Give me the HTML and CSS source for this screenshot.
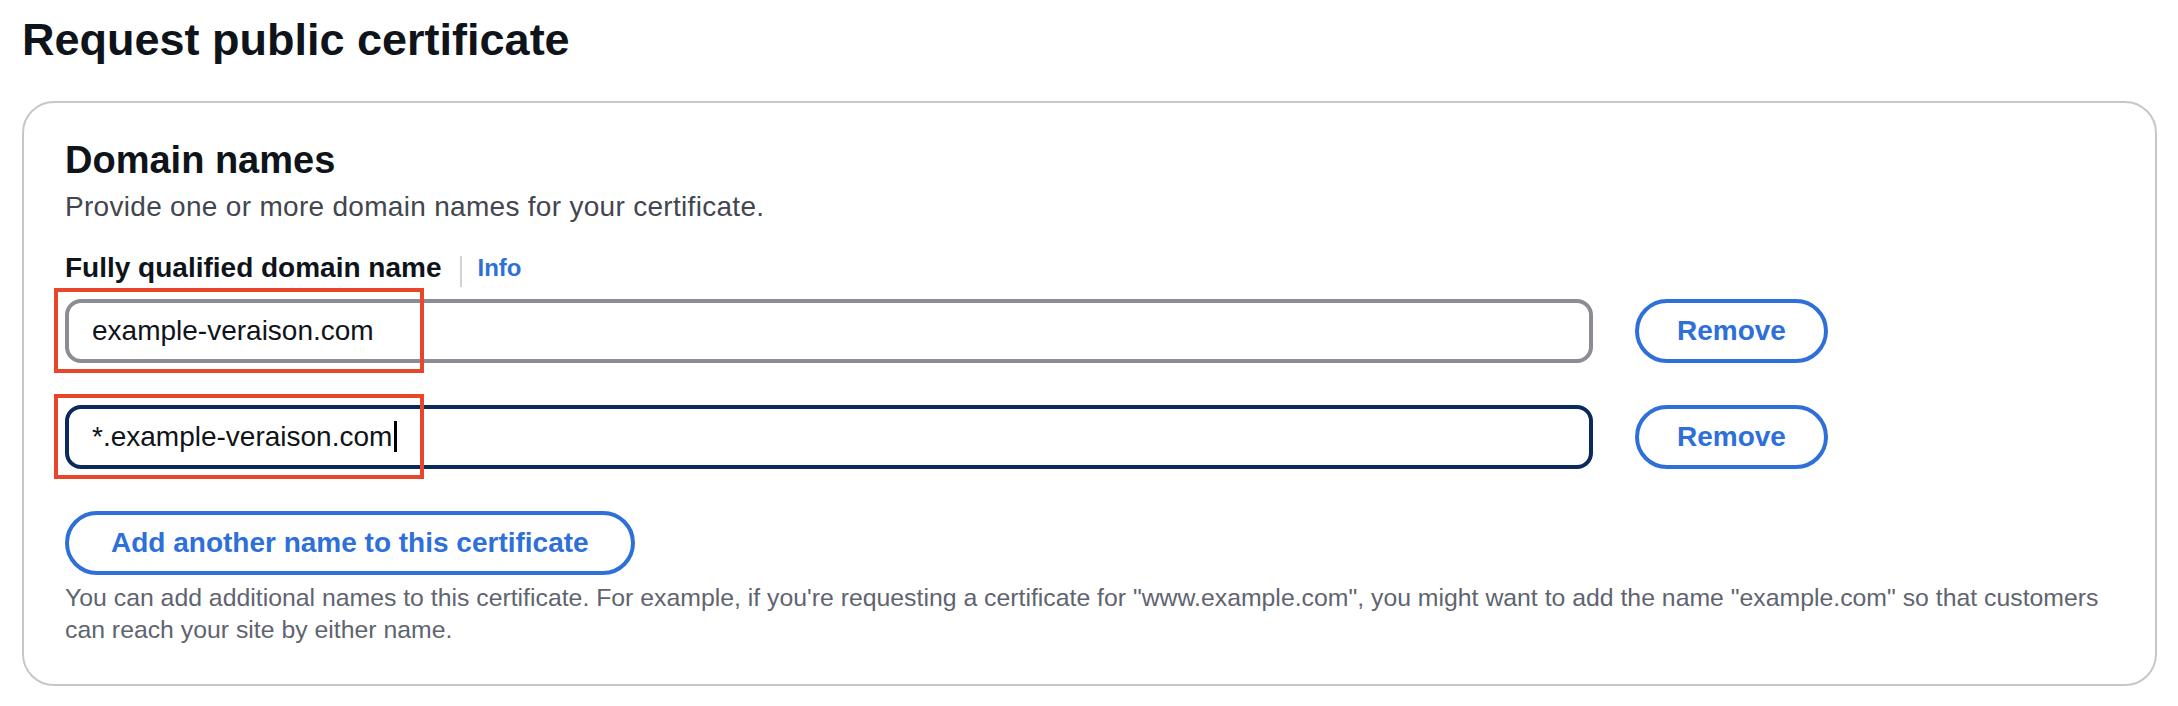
FILE: index.html
```html
<!DOCTYPE html>
<html lang="en">
<head>
<meta charset="utf-8">
<title>Request public certificate</title>
<link rel="stylesheet" href="styles.css">
</head>
<body>
<div class="page">
  <h1 class="page-title">Request public certificate</h1>
  <section class="card">
    <h2 class="card-title">Domain names</h2>
    <p class="card-desc">Provide one or more domain names for your certificate.</p>
    <div class="field-label">
      <span class="label-text">Fully qualified domain name</span>
      <span class="label-divider"></span>
      <a class="info-link">Info</a>
    </div>
    <div class="rows">
      <div class="row">
        <div class="input input-default">example-veraison.com</div>
        <button class="btn">Remove</button>
        <span class="highlight"></span>
      </div>
      <div class="row">
        <div class="input input-focused">*.example-veraison.com<span class="caret"></span></div>
        <button class="btn">Remove</button>
        <span class="highlight"></span>
      </div>
    </div>
    <button class="btn btn-add">Add another name to this certificate</button>
    <p class="help">You can add additional names to this certificate. For example, if you're requesting a certificate for "www.example.com", you might want to add the name "example.com" so that customers can reach your site by either name.</p>
  </section>
</div>
</body>
</html>
```

FILE: styles.css
```css
body {
  margin: 0;
  background: #ffffff;
  font-family: "Liberation Sans", Arial, sans-serif;
  color: #0f141a;
}

.page {
  padding: 12px 21px 20px 22px;
}

.page-title {
  margin: 0;
  font-size: 45px;
  line-height: 56px;
  font-weight: 700;
  color: #0f141a;
}

.card {
  margin-top: 33px;
  border: 2px solid #c6c6cd;
  border-radius: 32px;
  padding: 33px 41px 38px;
}

.card-title {
  margin: 0;
  font-size: 38px;
  line-height: 48px;
  font-weight: 700;
  color: #0f141a;
}

.card-desc {
  margin: 3px 0 0;
  font-size: 28px;
  line-height: 40px;
  letter-spacing: 0.3px;
  color: #424650;
}

.field-label {
  margin-top: 21px;
  display: flex;
  align-items: center;
  height: 40px;
}

.label-text {
  font-size: 28px;
  line-height: 40px;
  font-weight: 700;
  color: #0f141a;
}

.label-divider {
  width: 2px;
  height: 31px;
  background: #d1d1d6;
  margin: 7px 16px 0 18px;
}

.info-link {
  font-size: 24px;
  line-height: 40px;
  font-weight: 700;
  color: #2e6fd9;
}

.rows {
  margin-top: 11px;
  display: flex;
  flex-direction: column;
  gap: 42px;
}

.row {
  position: relative;
  display: grid;
  grid-template-columns: 1528px auto;
  column-gap: 42px;
  align-items: center;
  justify-items: start;
}

.input {
  box-sizing: border-box;
  width: 100%;
  height: 64px;
  border: 4px solid #8c8c94;
  border-radius: 16px;
  padding: 0 23px;
  font-size: 28px;
  line-height: 56px;
  color: #0f141a;
  white-space: nowrap;
}

.input-default {
  border-color: #8c8c94;
}

.input-focused {
  border-color: #0b2a5c;
}

.caret {
  display: inline-block;
  width: 3px;
  height: 31px;
  margin-left: 2px;
  background: #000000;
  vertical-align: -6px;
}

.btn {
  box-sizing: border-box;
  height: 64px;
  border: 4px solid #2e6fd9;
  border-radius: 32px;
  background: #ffffff;
  color: #2e6fd9;
  font-family: inherit;
  font-size: 28px;
  font-weight: 700;
  line-height: 56px;
  padding: 0 38px;
  white-space: nowrap;
}

.btn-add {
  display: block;
  margin-top: 42px;
  padding: 0 42px;
}

.highlight {
  position: absolute;
  left: -11px;
  top: -11px;
  width: 370px;
  height: 85px;
  box-sizing: border-box;
  border: 4px solid #e8462b;
  pointer-events: none;
}

.help {
  margin: 7px 0 0;
  font-size: 24.8px;
  line-height: 32px;
  color: #5f6470;
}
```
